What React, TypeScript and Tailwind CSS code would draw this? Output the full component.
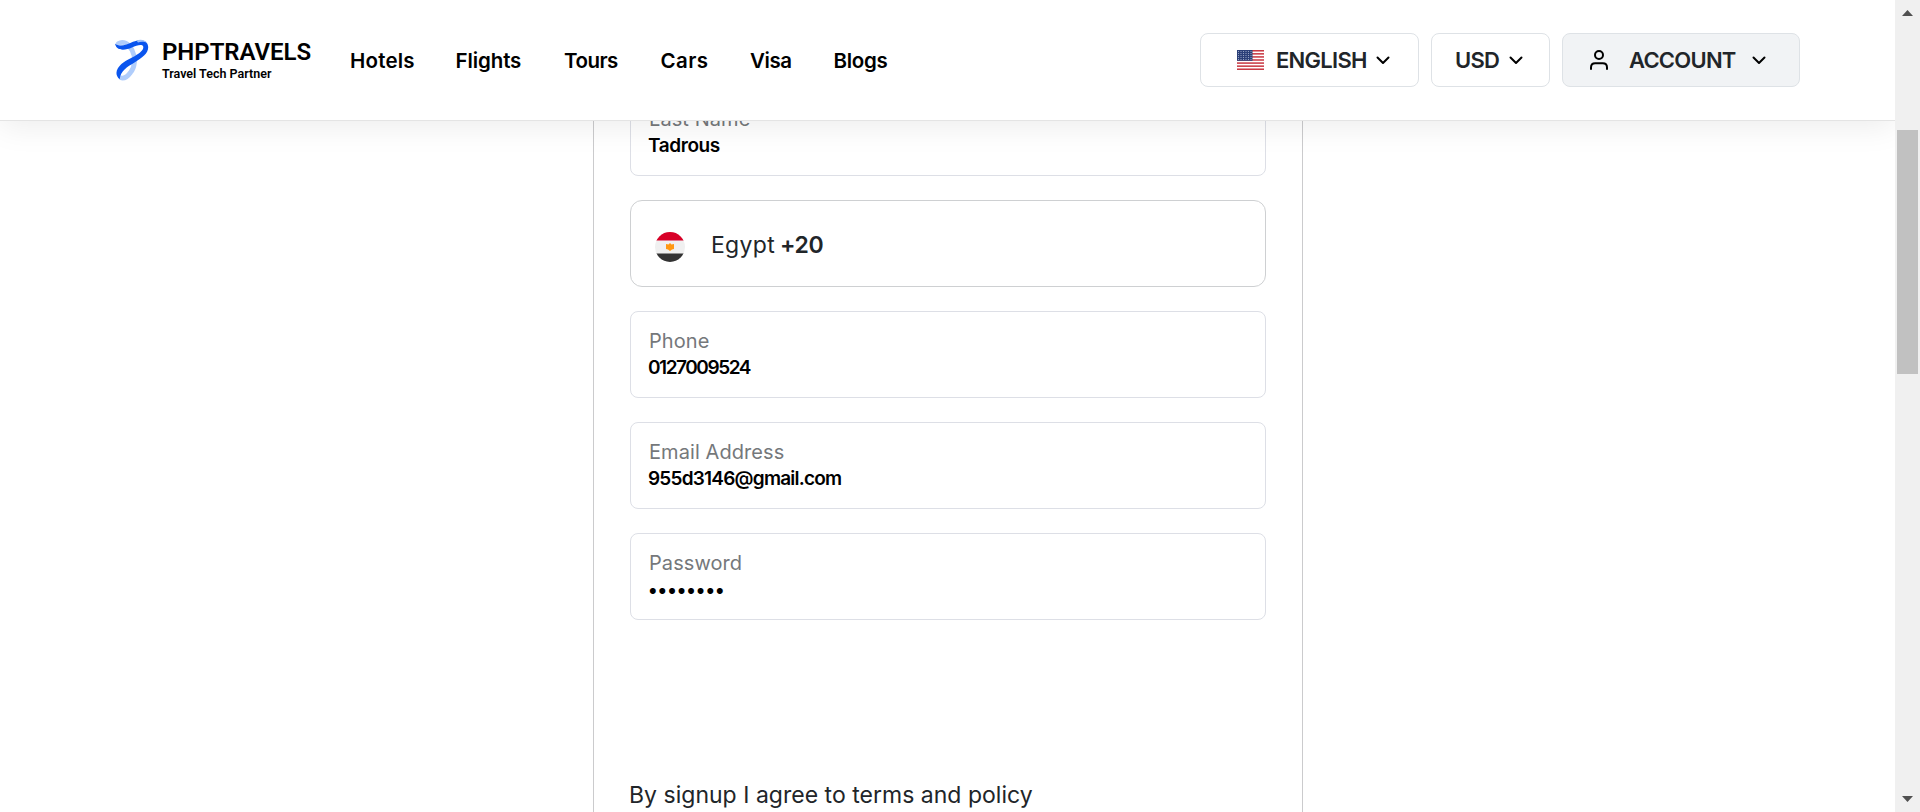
import React from 'react';

const navItems = [
  { label: 'Hotels', cls: 'w-[105.5px] tracking-[0.2px]' },
  { label: 'Flights', cls: 'w-[108.5px] tracking-[-0.1px]' },
  { label: 'Tours', cls: 'w-[96.5px] tracking-[-0.5px]' },
  { label: 'Cars', cls: 'w-[89.5px] tracking-[0.4px]' },
  { label: 'Visa', cls: 'w-[83.5px] tracking-[-0.4px]' },
  { label: 'Blogs', cls: 'tracking-[-0.3px]' },
];

function Chevron() {
  return (
    <svg className="h-[9px] w-[14px] shrink-0" viewBox="0 0 14 9" fill="none">
      <path d="M1.5 1.5 L7 7 L12.5 1.5" stroke="#000" strokeWidth="2" strokeLinecap="round" strokeLinejoin="round" />
    </svg>
  );
}

function Logo() {
  return (
    <div className="flex w-[235px] items-start">
      <svg className="h-[42px] w-[34px] shrink-0" viewBox="0 0 34 42" fill="none">
        <path d="M3.5 4.5 C8 1.500 13.500 4.500 17 11 C21 19 20 28 15.500 33.500 C13 37 9.500 39.500 6.500 39" stroke="#b0cdfb" strokeWidth="4.800" strokeLinecap="round" />
        <path d="M0 4.500 C4.500 8.500 11 6 18 2.800 C25.500 -0.400 33 1 33.200 8 C33.400 14.500 27 19 19.500 23.500 C12 28 5.500 32 4.700 40.300 C1 37 0.500 33 3 29 C7 23 13.500 20.500 20 17 C25.500 14 29 10.500 28.200 7.500 C27 4.500 21.500 6.500 17 8.500 C10 11.500 1.500 12.500 0 4.500 Z" fill="#0a55ee" />
        <path d="M21.500 1.400 C26 -0.200 30.500 1 32.400 4.200 C30 2.600 26 2.600 23 3.400 Z" fill="#9dc0fa" />
      </svg>
      <div className="ml-[13px] font-['Roboto',sans-serif] text-black">
        <div className="text-[24px] leading-[27px] font-semibold tracking-[-0.05px] whitespace-nowrap">PHPTRAVELS</div>
        <div className="text-[12.5px] leading-[15px] font-semibold whitespace-nowrap">Travel Tech Partner</div>
      </div>
    </div>
  );
}

function UsFlag() {
  const stripes = [0, 2, 4, 6, 8, 10, 12];
  return (
    <svg className="h-[20px] w-[27px] shrink-0" viewBox="0 0 27 20">
      <rect width="27" height="20" fill="#fff" />
      {stripes.map((s) => (
        <rect key={s} y={(s * 20) / 13} width="27" height={20 / 13} fill="#c93a45" />
      ))}
      <rect width="15.500" height="10.800" fill="#2b4078" />
      {[1.5, 3.5, 5.5, 7.5, 9.5].map((y) =>
        [1.5, 4, 6.5, 9, 11.5, 14].map((x) => <circle key={`${x}-${y}`} cx={x} cy={y} r="0.550" fill="#a9b4d0" />),
      )}
    </svg>
  );
}

function EgyptFlag() {
  return (
    <svg className="h-[30px] w-[30px] shrink-0" viewBox="0 0 30 30">
      <defs>
        <clipPath id="round">
          <circle cx="15" cy="15" r="15" />
        </clipPath>
      </defs>
      <g clipPath="url(#round)">
        <rect width="30" height="30" fill="#f0f0f0" />
        <rect width="30" height="8.500" fill="#d80027" />
        <rect y="21.500" width="30" height="8.500" fill="#333" />
        <path d="M11 12 L13.500 12.500 L15 11 L16.500 12.500 L19 12 V17 L17 17.500 L15 19 L13 17.500 L11 17 Z" fill="#ff9811" />
      </g>
    </svg>
  );
}

function Field({ label, children }: { label: string; children: React.ReactNode }) {
  return (
    <div className="h-[87px] shrink-0 rounded-lg border border-[#dddfe6] bg-white pt-4 pl-[17px]">
      <div className="pl-px text-[20px] leading-[26px] tracking-[0.08px] text-[#75787b]">{label}</div>
      <div className="text-[19px] leading-[28px] font-semibold text-black">{children}</div>
    </div>
  );
}

export default function App() {
  return (
    <div className="flex h-[812px] w-[1920px] overflow-hidden bg-white font-['Inter',sans-serif] text-[#212529]">
      <div className="flex min-w-0 flex-1 flex-col overflow-hidden">
        <header className="relative z-10 flex h-[121px] shrink-0 items-center border-b border-[#e4e4e4] bg-white pr-[95px] pl-[115px] shadow-[0_5px_30px_rgba(0,0,0,0.08)]">
          <Logo />
          <nav className="flex pt-px text-[20.5px] leading-6 font-semibold whitespace-nowrap text-black">
            {navItems.map((n) => (
              <a key={n.label} className={n.cls}>
                {n.label}
              </a>
            ))}
          </nav>
          <div className="ml-auto flex gap-3 text-[22px] leading-[26px] font-semibold">
            <button className="flex h-[54px] w-[219px] items-center rounded-lg border border-[#dee2e6] pl-9">
              <UsFlag />
              <span className="ml-3 w-[100px] text-left tracking-[-0.72px]">ENGLISH</span>
              <span className="pt-px"><Chevron /></span>
            </button>
            <button className="flex h-[54px] w-[119px] items-center rounded-lg border border-[#dee2e6] pl-[23px]">
              <span className="w-[54px] text-left tracking-[-0.75px]">USD</span>
              <span className="pt-px"><Chevron /></span>
            </button>
            <button className="flex h-[54px] w-[238px] items-center rounded-lg border border-[#dee2e6] bg-[#f1f3f5] pl-[27px]">
              <svg className="h-[20px] w-[18px] shrink-0" viewBox="0 0 18 20" fill="none" stroke="#000" strokeWidth="2" strokeLinecap="round">
                <circle cx="9" cy="5" r="4" />
                <path d="M1 19 V17.500 C1 15 2.700 13.300 5.200 13.300 H12.800 C15.300 13.300 17 15 17 17.500 V19" />
              </svg>
              <span className="ml-[21px] w-[123px] text-left tracking-[-0.75px]">ACCOUNT</span>
              <span className="pt-px"><Chevron /></span>
            </button>
          </div>
        </header>

        <main className="-mt-[81px] ml-[593px] flex w-[710px] flex-1 flex-col border-x border-[#cbcbcd] px-9 pt-[49px]">
          <div className="flex flex-col gap-6">
            <Field label="Last Name"><span className="tracking-[-0.4px]">Tadrous</span></Field>
            <div className="flex h-[87px] items-center rounded-xl border border-[#ced0d2] bg-white pl-6">
              <span className="pt-[7px]"><EgyptFlag /></span>
              <span className="ml-[26px] w-[69px] pt-0.5 text-[23px] leading-7 tracking-[0.3px]">Egypt</span>
              <span className="pt-0.5 text-[23px] leading-7 font-semibold tracking-[-0.3px]">+20</span>
            </div>
            <Field label="Phone"><span className="tracking-[-1.45px]">0127009524</span></Field>
            <Field label="Email Address"><span className="tracking-[-0.78px]">955d3146@gmail.com</span></Field>
            <Field label="Password"><span className="inline-block pt-px">••••••••</span></Field>
          </div>
          <p className="-ml-px mt-[161px] shrink-0 text-[23px] leading-7 tracking-[0.02px] whitespace-nowrap">By signup I agree to terms and policy</p>
        </main>
      </div>

      <aside className="flex w-[25px] shrink-0 flex-col items-center bg-[#f0f0f0] pt-[10px] pb-[10px]">
        <svg className="h-[6px] w-[11px] shrink-0" viewBox="0 0 11 6"><path d="M0 6 L5.500 0 L11 6 Z" fill="#505050" /></svg>
        <div className="mt-[114px] h-[244px] w-[21px] shrink-0 bg-[#c1c1c1]" />
        <svg className="mt-auto h-[6px] w-[11px] shrink-0" viewBox="0 0 11 6"><path d="M0 0 L5.500 6 L11 0 Z" fill="#505050" /></svg>
      </aside>
    </div>
  );
}
